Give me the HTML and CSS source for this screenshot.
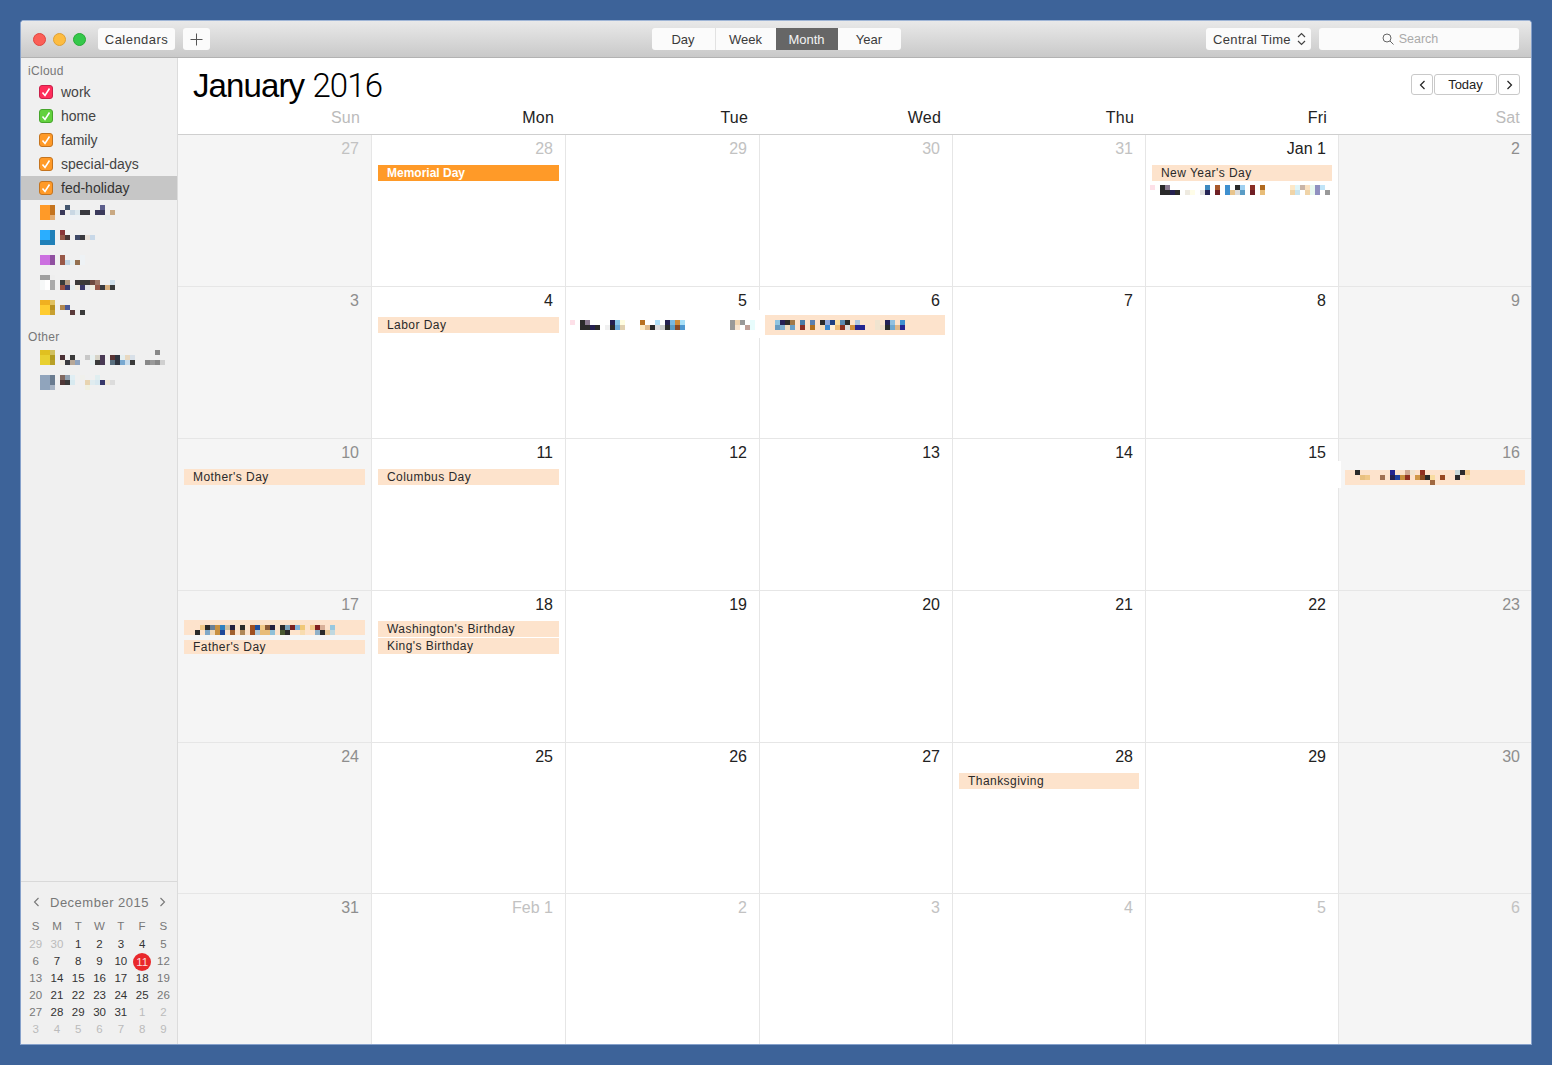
FILE: index.html
```html
<!DOCTYPE html>
<html lang="en">
<head>
<meta charset="utf-8">
<title>Calendar</title>
<link rel="stylesheet" href="styles.css">
</head>
<body>
<div class="window">
  <header class="toolbar">
    <div class="tb-left">
      <div class="lights"><span class="light red"></span><span class="light yellow"></span><span class="light green"></span></div>
      <button class="tb-btn cal-btn">Calendars</button>
      <button class="tb-btn plus-btn"><svg width="13" height="13" viewBox="0 0 13 13"><path d="M6.5 0.5v12M0.5 6.5h12" stroke="#555" stroke-width="1" fill="none"/></svg></button>
    </div>
    <nav class="segments">
      <span class="seg seg-day">Day</span><span class="seg seg-week">Week</span><span class="seg seg-month">Month</span><span class="seg seg-year">Year</span>
    </nav>
    <div class="tb-right">
      <div class="tb-btn tz">Central Time<svg width="9" height="14" viewBox="0 0 9 14"><path d="M1 5l3.5-3.5L8 5M1 9l3.5 3.5L8 9" stroke="#444" stroke-width="1.2" fill="none"/></svg></div>
      <div class="search"><svg width="12" height="12" viewBox="0 0 12 12"><circle cx="5" cy="5" r="4" stroke="#666" fill="none"/><path d="M8 8l3.5 3.5" stroke="#666" fill="none"/></svg><span>Search</span></div>
    </div>
  </header>
  <div class="body">
    <aside class="sidebar">
      <div class="group-label first">iCloud</div>
      <div class="cal-row"><span class="check c-red"><svg width="10" height="10" viewBox="0 0 10 10"><path d="M1.5 5.5l2.5 3L8.500 1.500" class="tick"/></svg></span>work</div>
      <div class="cal-row"><span class="check c-green"><svg width="10" height="10" viewBox="0 0 10 10"><path d="M1.5 5.5l2.5 3L8.500 1.500" class="tick"/></svg></span>home</div>
      <div class="cal-row"><span class="check c-orange"><svg width="10" height="10" viewBox="0 0 10 10"><path d="M1.5 5.5l2.5 3L8.500 1.500" class="tick"/></svg></span>family</div>
      <div class="cal-row"><span class="check c-orange"><svg width="10" height="10" viewBox="0 0 10 10"><path d="M1.5 5.5l2.5 3L8.500 1.500" class="tick"/></svg></span>special-days</div>
      <div class="cal-row selected"><span class="check c-orange"><svg width="10" height="10" viewBox="0 0 10 10"><path d="M1.5 5.5l2.5 3L8.500 1.500" class="tick"/></svg></span>fed-holiday</div>

      <div class="cal-row blur"><svg class="mosaic" width="130" height="17" viewBox="40 203 130 17">
        <rect x="40" y="205" width="10" height="15" fill="#ff9a28"/><rect x="50" y="205" width="5" height="10" fill="#c4741f"/><rect x="50" y="215" width="5" height="5" fill="#e3ae74"/>
        <g class="px"><rect x="65" y="205" fill="#44566e"/><rect x="100" y="205" fill="#5c5e8c"/><rect x="60" y="210" fill="#3a3a5a"/><rect x="70" y="210" fill="#c9d8e4"/><rect x="75" y="210" fill="#dde9ef"/><rect x="80" y="210" fill="#3a3a3f"/><rect x="85" y="210" fill="#3a3a3f"/><rect x="95" y="210" fill="#3b3a5c"/><rect x="100" y="210" fill="#3b3a5c"/><rect x="110" y="210" fill="#c9a983"/><rect x="65" y="215" fill="#eef2f5"/><rect x="70" y="215" fill="#eef2f5"/><rect x="75" y="215" fill="#eef2f5"/><rect x="105" y="215" fill="#e8ecef"/></g>
      </svg></div>
      <div class="cal-row blur"><svg class="mosaic" width="130" height="18" viewBox="40 227 130 18">
        <rect x="40" y="230" width="10" height="10" fill="#2aaeff"/><rect x="40" y="240" width="15" height="5" fill="#2080b8"/><rect x="50" y="230" width="5" height="10" fill="#2080b8"/>
        <g class="px"><rect x="55" y="240" fill="#eef2f5"/><rect x="60" y="230" fill="#8a3538"/><rect x="60" y="235" fill="#985848"/><rect x="65" y="235" fill="#4a3535"/><rect x="75" y="235" fill="#3f4a68"/><rect x="80" y="235" fill="#3a3a3f"/><rect x="85" y="235" fill="#e8e0d8"/><rect x="90" y="235" fill="#c8d8e8"/></g>
      </svg></div>
      <div class="cal-row blur"><svg class="mosaic" width="130" height="14" viewBox="40 251 130 14">
        <rect x="40" y="255" width="10" height="10" fill="#cc70e0"/><rect x="50" y="255" width="5" height="10" fill="#9050a0"/>
        <g class="px"><rect x="60" y="255" fill="#985848"/><rect x="60" y="260" fill="#985848"/><rect x="65" y="260" fill="#c0d4e4"/><rect x="70" y="260" fill="#e4eef0"/><rect x="75" y="260" fill="#947050"/><rect x="80" y="255" fill="#eef2f5"/><rect x="80" y="260" fill="#eef2f5"/></g>
      </svg></div>
      <div class="cal-row blur"><svg class="mosaic" width="130" height="15" viewBox="40 275 130 15">
        <rect x="40" y="275" width="10" height="5" fill="#a0a0a0"/><rect x="50" y="275" width="5" height="5" fill="#eeeeee"/><rect x="40" y="280" width="5" height="10" fill="#f6f8f8"/><rect x="45" y="280" width="5" height="10" fill="#ffffff"/><rect x="50" y="280" width="5" height="10" fill="#aaaaaa"/>
        <g class="px"><rect x="60" y="280" fill="#3a3a3a"/><rect x="65" y="280" fill="#b09880"/><rect x="75" y="280" fill="#3a3a3a"/><rect x="80" y="280" fill="#3a3a3a"/><rect x="85" y="280" fill="#3a3a3a"/><rect x="90" y="280" fill="#704a40"/><rect x="95" y="280" fill="#a07868"/><rect x="110" y="280" fill="#d0dfea"/><rect x="60" y="285" fill="#985040"/><rect x="65" y="285" fill="#38386a"/><rect x="70" y="285" fill="#e4eef0"/><rect x="75" y="285" fill="#f0ece0"/><rect x="80" y="285" fill="#38386a"/><rect x="85" y="285" fill="#e0e4e8"/><rect x="90" y="285" fill="#f0ece0"/><rect x="95" y="285" fill="#985848"/><rect x="100" y="285" fill="#3a3a3f"/><rect x="105" y="285" fill="#d8b080"/><rect x="110" y="285" fill="#3a3a3a"/></g>
      </svg></div>
      <div class="cal-row blur"><svg class="mosaic" width="130" height="16" viewBox="40 299 130 16">
        <rect x="40" y="300" width="10" height="5" fill="#f0b020"/><rect x="40" y="305" width="10" height="10" fill="#ffcc30"/><rect x="50" y="300" width="5" height="5" fill="#e0c060"/><rect x="50" y="305" width="5" height="5" fill="#b89020"/><rect x="50" y="310" width="5" height="5" fill="#c8a030"/>
        <g class="px"><rect x="60" y="305" fill="#b08850"/><rect x="65" y="305" fill="#4a5a98"/><rect x="70" y="310" fill="#5a3a3a"/><rect x="75" y="310" fill="#eeeeee"/><rect x="80" y="310" fill="#3a3a3a"/></g>
      </svg></div>

      <div class="group-label other">Other</div>
      <div class="cal-row blur"><svg class="mosaic" width="130" height="17" viewBox="40 348 130 17">
        <rect x="40" y="350" width="10" height="5" fill="#e0c020"/><rect x="40" y="355" width="10" height="10" fill="#e8d030"/><rect x="50" y="350" width="5" height="5" fill="#d0c060"/><rect x="50" y="355" width="5" height="5" fill="#b09a20"/><rect x="50" y="360" width="5" height="5" fill="#b8a028"/>
        <g class="px"><rect x="155" y="350" fill="#888888"/><rect x="60" y="355" fill="#4a3035"/><rect x="70" y="355" fill="#3a3a3a"/><rect x="85" y="355" fill="#c8c8c8"/><rect x="90" y="355" fill="#e8f0f0"/><rect x="95" y="355" fill="#d8d4c8"/><rect x="100" y="355" fill="#4a3a55"/><rect x="110" y="355" fill="#5a3535"/><rect x="115" y="355" fill="#2f3540"/><rect x="120" y="355" fill="#e4eef0"/><rect x="125" y="355" fill="#e8d8c0"/><rect x="130" y="355" fill="#d8e0e8"/><rect x="60" y="360" fill="#f0ece4"/><rect x="65" y="360" fill="#3a3a40"/><rect x="70" y="360" fill="#b8a898"/><rect x="75" y="360" fill="#90a4c0"/><rect x="90" y="360" fill="#e8f0f0"/><rect x="95" y="360" fill="#3a3a3a"/><rect x="100" y="360" fill="#4a3a55"/><rect x="110" y="360" fill="#5a7080"/><rect x="115" y="360" fill="#2f3540"/><rect x="120" y="360" fill="#78a8d0"/><rect x="125" y="360" fill="#c8dcec"/><rect x="130" y="360" fill="#3a3a3a"/><rect x="145" y="360" fill="#888888"/><rect x="150" y="360" fill="#9a9a9a"/><rect x="155" y="360" fill="#888888"/><rect x="160" y="360" fill="#d0d0d0"/></g>
      </svg></div>
      <div class="cal-row blur"><svg class="mosaic" width="130" height="18" viewBox="40 372 130 18">
        <rect x="40" y="375" width="10" height="15" fill="#90a4bc"/><rect x="50" y="375" width="5" height="10" fill="#6a7c90"/><rect x="50" y="385" width="5" height="5" fill="#a8b4c4"/>
        <g class="px"><rect x="60" y="375" fill="#806860"/><rect x="65" y="375" fill="#90a0b0"/><rect x="70" y="375" fill="#e0eef4"/><rect x="80" y="375" fill="#f0f0ec"/><rect x="95" y="375" fill="#e0eef0"/><rect x="60" y="380" fill="#503838"/><rect x="65" y="380" fill="#3a3a3a"/><rect x="70" y="380" fill="#d8eaf0"/><rect x="85" y="380" fill="#e8d4b0"/><rect x="90" y="380" fill="#e0ecf0"/><rect x="95" y="380" fill="#d8e8f0"/><rect x="100" y="380" fill="#38386a"/><rect x="105" y="380" fill="#f0e8d8"/><rect x="110" y="380" fill="#dcdcdc"/><rect x="85" y="385" fill="#f0f0e0"/></g>
      </svg></div>

      <div class="mini">
        <div class="mini-head">
          <svg width="7" height="10" viewBox="0 0 7 10"><path d="M5.500 1L1.500 5l4 4" stroke="#777" stroke-width="1.100" fill="none"/></svg>
          <span>December 2015</span>
          <svg width="7" height="10" viewBox="0 0 7 10"><path d="M1.500 1l4 4-4 4" stroke="#777" stroke-width="1.100" fill="none"/></svg>
        </div>
        <div class="mini-grid">
          <b class="dow">S</b><b class="dow">M</b><b class="dow">T</b><b class="dow">W</b><b class="dow">T</b><b class="dow">F</b><b class="dow">S</b>
          <i class="out">29</i><i class="out">30</i><i>1</i><i>2</i><i>3</i><i>4</i><i class="we">5</i>
          <i class="we">6</i><i>7</i><i>8</i><i>9</i><i>10</i><i class="today"><em>11</em></i><i class="we">12</i>
          <i class="we">13</i><i>14</i><i>15</i><i>16</i><i>17</i><i>18</i><i class="we">19</i>
          <i class="we">20</i><i>21</i><i>22</i><i>23</i><i>24</i><i>25</i><i class="we">26</i>
          <i class="we">27</i><i>28</i><i>29</i><i>30</i><i>31</i><i class="out">1</i><i class="out">2</i>
          <i class="out">3</i><i class="out">4</i><i class="out">5</i><i class="out">6</i><i class="out">7</i><i class="out">8</i><i class="out">9</i>
        </div>
      </div>
    </aside>

    <main class="main">
      <div class="title-row">
        <h1 class="title"><span class="month">January</span> <span class="year">2016</span></h1>
        <div class="nav">
          <button class="nav-btn nav-arrow"><svg width="7" height="10" viewBox="0 0 7 10"><path d="M5.500 1L1.500 5l4 4" stroke="#222" stroke-width="1.200" fill="none"/></svg></button>
          <button class="nav-btn nav-today">Today</button>
          <button class="nav-btn nav-arrow"><svg width="7" height="10" viewBox="0 0 7 10"><path d="M1.500 1l4 4-4 4" stroke="#222" stroke-width="1.200" fill="none"/></svg></button>
        </div>
      </div>
      <div class="weekdays">
        <span class="dim">Sun</span><span>Mon</span><span>Tue</span><span>Wed</span><span>Thu</span><span>Fri</span><span class="dim">Sat</span>
      </div>
      <div class="grid">
        <div class="cell end"><div class="num out">27</div></div>
        <div class="cell"><div class="num out">28</div><div class="event strong">Memorial Day</div></div>
        <div class="cell"><div class="num out">29</div></div>
        <div class="cell"><div class="num out">30</div></div>
        <div class="cell"><div class="num out">31</div></div>
        <div class="cell"><div class="num">Jan 1</div><div class="event">New Year's Day</div>
          <svg class="mosaic ev-mosaic" width="180" height="10" viewBox="1150 185 180 10"><g class="px">
            <rect x="1150" y="185" fill="#fde0e8"/><rect x="1160" y="185" fill="#2a2a2a"/><rect x="1165" y="185" fill="#8a7a90"/><rect x="1160" y="190" fill="#2a2a2a"/><rect x="1165" y="190" fill="#2a2a2a"/><rect x="1170" y="190" fill="#252050"/><rect x="1175" y="190" fill="#2a2a2a"/><rect x="1185" y="190" fill="#eeeae0"/><rect x="1190" y="190" fill="#fffde8"/><rect x="1200" y="190" fill="#e0e0e0"/><rect x="1205" y="185" fill="#3f8ac0"/><rect x="1205" y="190" fill="#252555"/><rect x="1215" y="185" fill="#a8582a"/><rect x="1215" y="190" fill="#6f2025"/><rect x="1225" y="185" fill="#3f90cf"/><rect x="1225" y="190" fill="#3f90cf"/><rect x="1230" y="190" fill="#e8c48c"/><rect x="1235" y="185" fill="#2a2a2a"/><rect x="1235" y="190" fill="#dddddd"/><rect x="1240" y="185" fill="#a0d0f0"/><rect x="1240" y="190" fill="#5a9cc5"/><rect x="1250" y="185" fill="#8a2f25"/><rect x="1250" y="190" fill="#701f25"/><rect x="1260" y="185" fill="#b06a20"/><rect x="1260" y="190" fill="#e8bd78"/><rect x="1290" y="185" fill="#fce8c8"/><rect x="1290" y="190" fill="#f0d4a8"/><rect x="1295" y="185" fill="#dff5f8"/><rect x="1295" y="190" fill="#c8e4f0"/><rect x="1300" y="185" fill="#c8b4a8"/><rect x="1305" y="185" fill="#fae0c0"/><rect x="1305" y="190" fill="#f0d4a8"/><rect x="1310" y="185" fill="#e8f8f0"/><rect x="1310" y="190" fill="#e8f8f0"/><rect x="1315" y="185" fill="#9090c0"/><rect x="1315" y="190" fill="#9090c0"/><rect x="1320" y="185" fill="#c0e4f8"/><rect x="1325" y="190" fill="#999999"/>
          </g></svg>
        </div>
        <div class="cell end"><div class="num we">2</div></div>

        <div class="cell end"><div class="num we">3</div></div>
        <div class="cell"><div class="num">4</div><div class="event">Labor Day</div></div>
        <div class="cell"><div class="num">5</div>
          <svg class="mosaic ev-mosaic tue5" width="185" height="10" viewBox="570 320 185 10"><g class="px">
            <rect x="570" y="320" fill="#fde0e8"/><rect x="580" y="320" fill="#2a2a2a"/><rect x="580" y="325" fill="#2a2a2a"/><rect x="585" y="320" fill="#8a7a90"/><rect x="585" y="325" fill="#2a2a2a"/><rect x="590" y="325" fill="#252050"/><rect x="595" y="325" fill="#2a2a2a"/><rect x="605" y="325" fill="#f0f0f0"/><rect x="610" y="320" fill="#252050"/><rect x="610" y="325" fill="#2a2a2a"/><rect x="615" y="320" fill="#8ac8e8"/><rect x="615" y="325" fill="#6aa8d8"/><rect x="620" y="320" fill="#fffde0"/><rect x="620" y="325" fill="#e0d0b0"/><rect x="640" y="320" fill="#b87020"/><rect x="640" y="325" fill="#fde8c0"/><rect x="645" y="325" fill="#e0bc90"/><rect x="650" y="325" fill="#2a2a2a"/><rect x="655" y="320" fill="#b0e0f8"/><rect x="655" y="325" fill="#dddddd"/><rect x="660" y="325" fill="#cccccc"/><rect x="665" y="320" fill="#252050"/><rect x="665" y="325" fill="#2a2a2a"/><rect x="670" y="320" fill="#78b8e0"/><rect x="670" y="325" fill="#5a9cc5"/><rect x="675" y="320" fill="#d08c38"/><rect x="675" y="325" fill="#8a4a25"/><rect x="680" y="320" fill="#a8e0f8"/><rect x="680" y="325" fill="#5098d0"/><rect x="730" y="320" fill="#999999"/><rect x="730" y="325" fill="#999999"/><rect x="735" y="320" fill="#f0d4b0"/><rect x="735" y="325" fill="#f8e4d0"/><rect x="740" y="320" fill="#999999"/><rect x="745" y="325" fill="#c0a098"/><rect x="750" y="320" fill="#e8fcfc"/><rect x="750" y="325" fill="#e8fcfc"/>
          </g></svg>
          <span class="patch patch-tue"></span>
        </div>
        <div class="cell"><div class="num">6</div>
          <div class="event tall"><svg class="mosaic" width="180" height="10" viewBox="765 320 180 10"><g class="px">
            <rect x="775" y="320" fill="#90c4e0"/><rect x="775" y="325" fill="#6a9cc0"/><rect x="780" y="320" fill="#252055"/><rect x="780" y="325" fill="#80b0d0"/><rect x="785" y="320" fill="#2a2a2a"/><rect x="785" y="325" fill="#f0dcc0"/><rect x="790" y="320" fill="#a07848"/><rect x="790" y="325" fill="#6aa0c8"/><rect x="800" y="320" fill="#4a7ca8"/><rect x="800" y="325" fill="#8a2f25"/><rect x="810" y="320" fill="#5a80b0"/><rect x="810" y="325" fill="#b07020"/><rect x="820" y="320" fill="#2a2a2a"/><rect x="820" y="325" fill="#f5dcb8"/><rect x="825" y="320" fill="#90a8d8"/><rect x="825" y="325" fill="#3a88d0"/><rect x="830" y="320" fill="#204080"/><rect x="830" y="325" fill="#fff0d8"/><rect x="835" y="320" fill="#fce0a0"/><rect x="835" y="325" fill="#f0c078"/><rect x="840" y="320" fill="#5a88b0"/><rect x="840" y="325" fill="#8a3020"/><rect x="845" y="320" fill="#2a2a2a"/><rect x="845" y="325" fill="#dddddd"/><rect x="850" y="325" fill="#d09040"/><rect x="855" y="320" fill="#b0c8e0"/><rect x="855" y="325" fill="#252590"/><rect x="860" y="325" fill="#252590"/><rect x="875" y="320" fill="#f0e4d0"/><rect x="875" y="325" fill="#f0e4d0"/><rect x="880" y="325" fill="#f0dcc8"/><rect x="885" y="320" fill="#252055"/><rect x="885" y="325" fill="#2a2a2a"/><rect x="890" y="320" fill="#90c0e0"/><rect x="890" y="325" fill="#70a8d0"/><rect x="895" y="325" fill="#e0b888"/><rect x="900" y="320" fill="#4090d0"/><rect x="900" y="325" fill="#252590"/>
          </g></svg></div>
        </div>
        <div class="cell"><div class="num">7</div></div>
        <div class="cell"><div class="num">8</div></div>
        <div class="cell end"><div class="num we">9</div></div>

        <div class="cell end"><div class="num we">10</div><div class="event">Mother's Day</div></div>
        <div class="cell"><div class="num">11</div><div class="event">Columbus Day</div></div>
        <div class="cell"><div class="num">12</div></div>
        <div class="cell"><div class="num">13</div></div>
        <div class="cell"><div class="num">14</div></div>
        <div class="cell"><div class="num">15</div></div>
        <div class="cell end"><div class="num we">16</div>
          <div class="event short down1"><svg class="mosaic" width="180" height="15" viewBox="1345 470 180 15"><g class="px">
            <rect x="1355" y="470" fill="#2a2a2a"/><rect x="1360" y="475" fill="#e8c080"/><rect x="1365" y="475" fill="#f0c888"/><rect x="1380" y="475" fill="#a07050"/><rect x="1390" y="470" fill="#252590"/><rect x="1390" y="475" fill="#252050"/><rect x="1395" y="475" fill="#2040a0"/><rect x="1400" y="475" fill="#c89040"/><rect x="1405" y="470" fill="#d0a890"/><rect x="1405" y="475" fill="#903020"/><rect x="1410" y="470" fill="#f0e4d0"/><rect x="1415" y="475" fill="#d09848"/><rect x="1420" y="470" fill="#903020"/><rect x="1420" y="475" fill="#8a4a20"/><rect x="1425" y="475" fill="#2a2a2a"/><rect x="1430" y="475" fill="#f8dca0"/><rect x="1430" y="480" fill="#a06840"/><rect x="1440" y="475" fill="#984820"/><rect x="1455" y="470" fill="#c8d8d8"/><rect x="1455" y="475" fill="#2a2a2a"/><rect x="1460" y="470" fill="#2a2a2a"/><rect x="1465" y="470" fill="#f0c888"/><rect x="1465" y="475" fill="#f8e0b0"/>
          </g></svg></div>
          <span class="patch patch-sat"></span>
        </div>

        <div class="cell end"><div class="num we">17</div>
          <div class="event short up1"><svg class="mosaic" width="181" height="15" viewBox="184 620 181 15"><g class="px">
            <rect x="195" y="630" fill="#2a2a2a"/><rect x="200" y="625" fill="#f0c888"/><rect x="205" y="625" fill="#2a2a2a"/><rect x="205" y="630" fill="#80a8c8"/><rect x="210" y="625" fill="#6a8098"/><rect x="210" y="630" fill="#f0d8b8"/><rect x="215" y="625" fill="#c89040"/><rect x="215" y="630" fill="#c89040"/><rect x="220" y="625" fill="#3080c0"/><rect x="220" y="630" fill="#204898"/><rect x="225" y="625" fill="#d0c0a0"/><rect x="230" y="625" fill="#252040"/><rect x="230" y="630" fill="#a06030"/><rect x="240" y="625" fill="#2a2a2a"/><rect x="240" y="630" fill="#b08858"/><rect x="250" y="625" fill="#a05020"/><rect x="250" y="630" fill="#a05020"/><rect x="255" y="625" fill="#2050a0"/><rect x="255" y="630" fill="#b0c8d8"/><rect x="260" y="625" fill="#f0c888"/><rect x="260" y="630" fill="#e8bc78"/><rect x="265" y="625" fill="#8a5a38"/><rect x="265" y="630" fill="#e8bc78"/><rect x="270" y="625" fill="#252040"/><rect x="270" y="630" fill="#90c0d8"/><rect x="280" y="625" fill="#2a2a2a"/><rect x="280" y="630" fill="#485830"/><rect x="285" y="625" fill="#7aa0b8"/><rect x="285" y="630" fill="#2a2a2a"/><rect x="290" y="625" fill="#7a2020"/><rect x="295" y="625" fill="#80b0d8"/><rect x="300" y="625" fill="#f0c878"/><rect x="300" y="630" fill="#f8dcb0"/><rect x="310" y="625" fill="#f0c888"/><rect x="315" y="625" fill="#802020"/><rect x="315" y="630" fill="#90b0c8"/><rect x="320" y="625" fill="#d8b098"/><rect x="320" y="630" fill="#2a2a2a"/><rect x="325" y="630" fill="#e8c898"/><rect x="330" y="625" fill="#98c8e0"/><rect x="330" y="630" fill="#c0d8e0"/>
          </g></svg></div>
          <div class="event gap5">Father's Day</div>
        </div>
        <div class="cell"><div class="num">18</div><div class="event">Washington's Birthday</div><div class="event gap1">King's Birthday</div></div>
        <div class="cell"><div class="num">19</div></div>
        <div class="cell"><div class="num">20</div></div>
        <div class="cell"><div class="num">21</div></div>
        <div class="cell"><div class="num">22</div></div>
        <div class="cell end"><div class="num we">23</div></div>

        <div class="cell end"><div class="num we">24</div></div>
        <div class="cell"><div class="num">25</div></div>
        <div class="cell"><div class="num">26</div></div>
        <div class="cell"><div class="num">27</div></div>
        <div class="cell"><div class="num">28</div><div class="event">Thanksgiving</div></div>
        <div class="cell"><div class="num">29</div></div>
        <div class="cell end"><div class="num we">30</div></div>

        <div class="cell end last"><div class="num we">31</div></div>
        <div class="cell last"><div class="num out">Feb 1</div></div>
        <div class="cell last"><div class="num out">2</div></div>
        <div class="cell last"><div class="num out">3</div></div>
        <div class="cell last"><div class="num out">4</div></div>
        <div class="cell last"><div class="num out">5</div></div>
        <div class="cell end last"><div class="num out">6</div></div>
      </div>
    </main>
  </div>
</div>
</body>
</html>
```

FILE: styles.css
```css
* { box-sizing: border-box; }
html, body { margin: 0; height: 100%; }
body {
  background: #3d6399;
  padding: 20px 20px 20px 20px;
  font-family: "Liberation Sans", Arial, sans-serif;
  color: #222;
}
button { font: inherit; color: inherit; padding: 0; margin: 0; }

.window {
  height: 1025px;
  background: #fff;
  border: 1px solid #86a1cb;
  border-top-color: #9fb5d6;
  border-radius: 4px 4px 0 0;
  display: flex;
  flex-direction: column;
  overflow: hidden;
}

/* toolbar */
.toolbar {
  flex: none;
  height: 37px;
  display: grid;
  grid-template-columns: 1fr auto 1fr;
  align-items: start;
  padding-top: 7px;
  background: linear-gradient(#e9e9e9, #c9c9c9);
  border-bottom: 1px solid #b2b2b2;
}
.tb-left { display: flex; align-items: center; padding-left: 12px; }
.lights { display: flex; gap: 7px; margin-right: 12px; height: 22px; align-items: center; }
.light { width: 13px; height: 13px; border-radius: 50%; }
.red { background: #fb5f57; border: 1px solid #e0443e; }
.yellow { background: #fdbc40; border: 1px solid #dea034; }
.green { background: #34c84a; border: 1px solid #27aa35; }
.tb-btn {
  height: 22px;
  background: #fbfbfb;
  border: 0;
  border-radius: 3px;
  font-size: 13px;
  color: #3a3a3a;
  display: flex;
  align-items: center;
  justify-content: center;
}
.cal-btn { width: 77px; letter-spacing: 0.45px; }
.plus-btn { width: 27px; margin-left: 8px; }

.segments {
  display: flex;
  height: 22px;
  border-radius: 3px;
  background: #fbfbfb;
  overflow: hidden;
  font-size: 13px;
  color: #3a3a3a;
}
.seg { display: flex; align-items: center; justify-content: center; }
.seg-day { width: 64px; border-right: 1px solid #e2e2e2; }
.seg-week { width: 60px; }
.seg-month { width: 62px; background: #666; color: #f4f4f4; }
.seg-year { width: 63px; }

.tb-right { display: flex; justify-content: flex-end; padding-right: 12px; gap: 8px; }
.tz { width: 105px; padding: 0 5px 0 7px; justify-content: space-between; letter-spacing: 0.35px; }
.search {
  width: 200px;
  height: 22px;
  background: #fbfbfb;
  border-radius: 3px;
  display: flex;
  align-items: center;
  justify-content: center;
  gap: 5px;
  padding-right: 18px;
  font-size: 12.500px;
  color: #aaa;
}

/* body */
.body { flex: 1; min-height: 0; display: flex; }
.sidebar {
  flex: none;
  width: 157px;
  background: #f0f0f0;
  border-right: 1px solid #dcdcdc;
  display: flex;
  flex-direction: column;
}
.group-label { font-size: 12px; letter-spacing: 0.3px; color: #777; padding-left: 7px; height: 13px; line-height: 13px; }
.group-label.first { margin-top: 7px; margin-bottom: 2px; }
.group-label.other { margin-top: 11px; margin-bottom: 1px; }
.cal-row {
  height: 24px;
  display: flex;
  align-items: center;
  padding-left: 18px;
  font-size: 14px;
  color: #444;
  flex: none;
}
.cal-row.selected { background: #c6c6c6; color: #333; }
.cal-row.blur { padding: 3px 0 0 19px; align-items: flex-start; }
.check {
  width: 14px;
  height: 14px;
  border-radius: 3px;
  margin-right: 8px;
  border: 1px solid;
  display: flex;
  align-items: center;
  justify-content: center;
}
.tick { stroke: #fff; stroke-width: 1.6; fill: none; }
.c-red { background: #ff2d5b; border-color: #c9204a; }
.c-green { background: #62d13d; border-color: #46a52c; }
.c-orange { background: #ff9a28; border-color: #c4741f; }
.mosaic { display: block; shape-rendering: crispEdges; overflow: visible; }
.px rect { width: 5px; height: 5px; }

/* mini calendar */
.mini { margin-top: auto; border-top: 1px solid #d9d9d9; height: 163px; padding-top: 13px; flex: none; }
.mini-head {
  display: flex;
  align-items: center;
  justify-content: space-between;
  padding: 0 11px 0 12px;
  height: 14px;
  font-size: 13px;
  color: #777;
  letter-spacing: 0.5px;
}
.mini-grid {
  display: grid;
  grid-template-columns: repeat(7, 21.3px);
  grid-auto-rows: 17px;
  margin: 9px 0 0 4px;
  font-size: 11.500px;
  text-align: center;
  line-height: 17px;
}
.mini-grid .dow { font-weight: normal; color: #777; height: 18px; }
.mini-grid i { font-style: normal; color: #333; }
.mini-grid i.we { color: #777; }
.mini-grid i.out { color: #bbb; }
.mini-grid .dow ~ i { position: relative; top: 1px; }
.today em {
  display: block;
  width: 18px;
  height: 18px;
  line-height: 18px;
  margin: -0.5px auto 0;
  border-radius: 50%;
  background: #e9282b;
  color: #fbdcdc;
  font-style: normal;
}

/* main */
.main { flex: 1; min-width: 0; display: flex; flex-direction: column; }
.title-row {
  flex: none;
  height: 49px;
  display: flex;
  justify-content: space-between;
  padding: 8px 11px 0 15px;
}
.title { margin: 0; font-size: 33px; font-weight: 400; line-height: 40px; letter-spacing: -0.9px; color: #000; white-space: nowrap; }
.year { font-family: Roboto, "Liberation Sans", sans-serif; font-weight: 300; letter-spacing: -0.85px; }
.nav { display: flex; gap: 1px; margin-top: 8px; height: 21px; }
.nav-btn { height: 21px; background: #fff; border: 1px solid #c9c9c9; border-radius: 3px; font-size: 13px; color: #222; display: flex; align-items: center; justify-content: center; }
.nav-arrow { width: 22px; }
.nav-today { width: 63px; }
.weekdays {
  flex: none;
  height: 28px;
  padding-top: 1px;
  display: grid;
  grid-template-columns: 194px 194px 194px 193px 193px 193px 1fr;
  border-bottom: 1px solid #cfcfcf;
  font-size: 16px;
  line-height: 20px;
  letter-spacing: 0.2px;
  text-align: right;
}
.weekdays span { padding-right: 12px; }
.weekdays span:last-child { padding-right: 11px; }
.weekdays .dim { color: #bbb; }

.grid {
  flex: 1;
  min-height: 0;
  display: grid;
  grid-template-columns: 194px 194px 194px 193px 193px 193px 1fr;
  grid-template-rows: 152px 152px 152px 152px 151px 1fr;
}
.cell {
  position: relative;
  min-width: 0;
  border-right: 1px solid #e6e6e6;
  border-bottom: 1px solid #e6e6e6;
  padding: 0 6px;
}
.cell:nth-child(7n) { border-right: 0; }
.cell.end { background: #f5f5f5; }
.cell.last { border-bottom: 0; }
.num {
  height: 30px;
  padding: 5px 6px 0 0;
  text-align: right;
  font-size: 16px;
  line-height: 18px;
  color: #222;
}
.cell:nth-child(7n) .num { padding-right: 5px; }
.num.out { color: #c2c2c2; }
.num.we { color: #8e8e8e; }
.event {
  height: 16px;
  background: #fde3cc;
  font-size: 12px;
  letter-spacing: 0.45px;
  line-height: 16px;
  color: #2a2a2a;
  padding-left: 9px;
  white-space: nowrap;
  overflow: hidden;
}
.event.strong { background: #ff9a28; color: #fff; font-weight: bold; letter-spacing: 0; }
.event.tall { height: 20px; margin: -2px 1px 0 -1px; padding: 5px 0 0; overflow: visible; }
.event.short { height: 15px; padding: 0; overflow: visible; }
.event.down1 { margin-top: 1px; }
.event.up1 { margin-top: -1px; }
.event.gap5 { margin-top: 5px; height: 14px; line-height: 14px; }
.event.gap1 { margin-top: 1px; }
.ev-mosaic { position: absolute; left: 4px; top: 50px; }
.cell .tue5 { top: 33px; }
.patch { position: absolute; background: #fff; z-index: 1; }
.patch-tue { right: -1px; top: 23px; width: 1px; height: 28px; }
.patch-sat { left: -1px; top: 22px; width: 3px; height: 27px; }
```
